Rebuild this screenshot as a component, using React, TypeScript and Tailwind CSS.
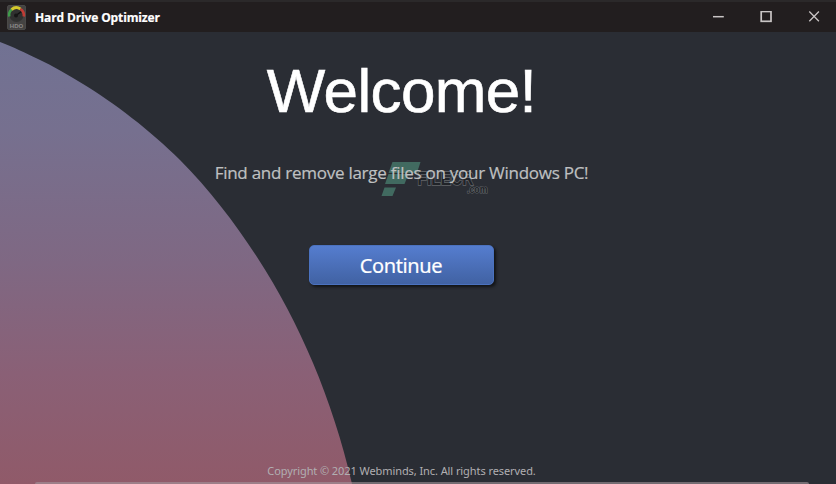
import React from "react";

function AppIcon() {
  return (
    <svg className="h-[25px] w-[19px] shrink-0" viewBox="0 0 19 25" fill="none">
      <rect x="0.5" y="0.5" width="18" height="24" rx="1.5" fill="#444342" stroke="#4a4948" />
      <circle cx="9.5" cy="10" r="7" fill="#303130" />
      <path d="M2.3 11.5A7.2 7.2 0 0 1 4.6 4.6" stroke="#3f9c4b" strokeWidth="2.6" />
      <path d="M4.6 4.6A7.2 7.2 0 0 1 13.4 4" stroke="#d3c82c" strokeWidth="3" />
      <path d="M13.4 4A7.2 7.2 0 0 1 16.7 11.5" stroke="#bf3c35" strokeWidth="2.6" />
      <path d="M9 10.5L14 6.8" stroke="#101010" strokeWidth="1.4" />
      <circle cx="9" cy="10.5" r="2" fill="#161616" />
      <text x="9.5" y="22.8" textAnchor="middle" fontSize="6" fontWeight="700" fill="#8b8988" fontFamily="Liberation Sans, sans-serif">HDO</text>
    </svg>
  );
}

function TitleBar() {
  return (
    <header className="flex h-8 shrink-0 items-center border-t-2 border-[#2b292a] bg-[#221e1f] pr-[16px] pl-[7px]">
      <AppIcon />
      <h1 className="mt-px ml-[9px] font-['Open_Sans','Noto_Sans',sans-serif] text-[12px] leading-4 font-bold tracking-[-0.13px] whitespace-nowrap text-white [-webkit-text-stroke:0.2px_white]">
        Hard Drive Optimizer
      </h1>
      <div className="ml-auto flex items-center gap-[36px] text-[#c9c5c5]">
        <svg className="h-3 w-3" viewBox="0 0 12 12" fill="none" stroke="currentColor" strokeWidth="1.5">
          <path d="M1 5.7H11.8" />
        </svg>
        <svg className="h-3 w-3" viewBox="0 0 12 12" fill="none" stroke="currentColor" strokeWidth="1.7">
          <rect x="1.2" y="0.5" width="9.8" height="9.8" />
        </svg>
        <svg className="h-3 w-3" viewBox="0 0 12 12" fill="none" stroke="currentColor" strokeWidth="1.3">
          <path d="M1.3 0.5L10.9 10.2M10.9 0.5L1.3 10.2" />
        </svg>
      </div>
    </header>
  );
}

function Swoosh() {
  return (
    <svg className="absolute top-0 left-0 h-[452px] w-[360px]" viewBox="0 32 360 452">
      <defs>
        <linearGradient id="dusk" gradientUnits="userSpaceOnUse" x1="0" y1="42" x2="0" y2="484">
          <stop offset="0" stopColor="#717293" />
          <stop offset="0.2" stopColor="#76708f" />
          <stop offset="0.5" stopColor="#7f6883" />
          <stop offset="0.75" stopColor="#8a6076" />
          <stop offset="1" stopColor="#905a69" />
        </linearGradient>
      </defs>
      <path
        d="M0 42C14 47 25 53 38 59C53 66 68 75 83 84C113 102 151 131 180 160C209 189 235 223 257 257C279 291 297 325 313 363C329 401 342 441 352 484H0Z"
        fill="url(#dusk)"
      />
    </svg>
  );
}

function Watermark() {
  return (
    <svg className="absolute top-[128px] left-[380px] h-[40px] w-[112px]" viewBox="380 160 112 40">
      <g fill="#416a60">
        <path d="M392.5 162H420.5L417 173H388.5Z" />
        <path d="M388.5 174H408.5L404.5 184H385Z" />
        <path d="M384.5 187.5H396L392.5 196H381.5Z" />
      </g>
      <g fill="#202328" stroke="#63666a" style={{ paintOrder: "stroke" }} fontFamily="Liberation Sans, sans-serif" fontWeight="700">
        <text x="417.5" y="185" fontSize="18" strokeWidth="1.4" textLength="56" lengthAdjust="spacingAndGlyphs">FILECR</text>
        <text x="467" y="192.5" fontSize="10" strokeWidth="1.2" textLength="20.5" lengthAdjust="spacingAndGlyphs">.com</text>
      </g>
    </svg>
  );
}

export default function App() {
  return (
    <div className="flex h-[484px] w-[836px] flex-col overflow-hidden bg-[#2a2d34]">
      <TitleBar />
      <main className="relative flex flex-1 flex-col overflow-hidden">
        <Swoosh />
        <Watermark />
        <div className="relative flex w-[802px] flex-1 flex-col items-center">
          <h2 className="mt-[24px] ml-px font-['Liberation_Sans',Arial,sans-serif] text-[62px] leading-[70px] tracking-[-0.65px] whitespace-nowrap text-white [-webkit-text-stroke:0.6px_white]">
            Welcome!
          </h2>
          <p className="mt-[35px] ml-px font-['Open_Sans','Noto_Sans',sans-serif] text-[17px] leading-6 tracking-[-0.26px] whitespace-nowrap text-[#bfc0c1] [-webkit-text-stroke:0.2px_#bfc0c1]">
            Find and remove large files on your Windows PC!
          </p>
          <button className="mt-[60px] h-[40px] w-[185px] rounded-[5px] border border-[#4b72bf] bg-linear-to-b from-[#557dcf] to-[#4162a3] pt-[2px] font-['Noto_Sans',sans-serif] text-[20px] leading-[36px] tracking-[-0.4px] whitespace-nowrap text-white shadow-[2px_2px_3px_#121417] [-webkit-text-stroke:0.2px_white]">
            Continue
          </button>
          <footer className="mt-auto mb-[5px] ml-px font-['Noto_Sans',sans-serif] text-[11px] leading-4 tracking-[-0.08px] whitespace-nowrap text-[#b1afb2]">
            Copyright © 2021 Webminds, Inc. All rights reserved.
          </footer>
        </div>
        <div className="absolute bottom-0 left-[35px] h-[2px] w-[774px] rounded-t-sm bg-[#a5969c]/60" />
      </main>
    </div>
  );
}
